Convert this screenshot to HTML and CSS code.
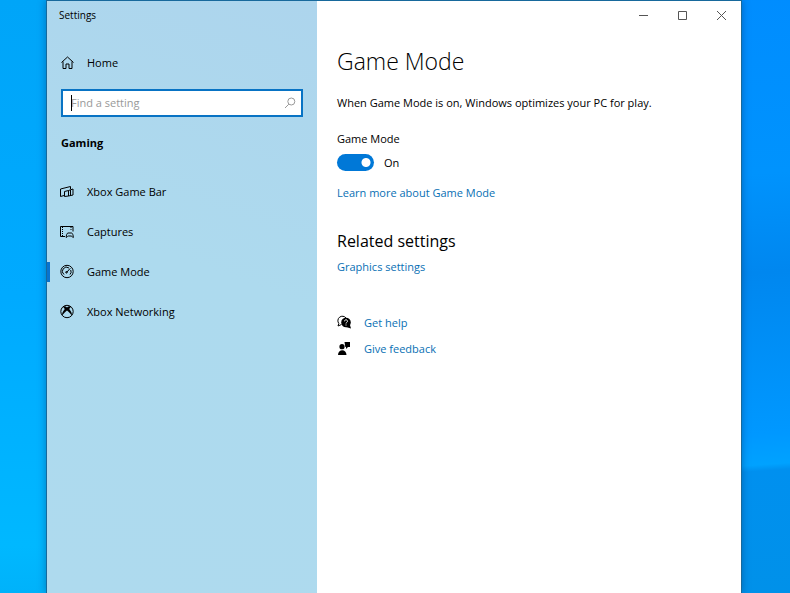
FILE: index.html
```html
<!DOCTYPE html>
<html lang="en">
<head>
<meta charset="utf-8">
<title>Settings</title>
<link rel="stylesheet" href="styles.css">
</head>
<body>
<div class="desktop">
  <div class="window">
    <aside class="sidebar">
      <div class="app-title">Settings</div>
      <a class="nav-link home" href="#">
        <svg class="icon" viewBox="0 0 16 16"><path d="M2.500 7.500 8.500 2l6 5.500M4 6.500v7h3V9h3v4.500h3v-7"/></svg>
        <span>Home</span>
      </a>
      <form class="search">
        <input class="search-input" type="text" aria-label="Find a setting" placeholder="Find a setting">
        <span class="caret"></span>
        <button class="search-button" type="button" aria-label="Search">
          <svg class="search-icon" viewBox="0 0 12 12"><circle cx="7.3" cy="4.5" r="3.5"/><path d="M4.8 7.2 1 11"/></svg>
        </button>
      </form>
      <h2 class="category">Gaming</h2>
      <nav class="nav">
        <a class="nav-link" href="#">
          <svg class="icon" viewBox="0 0 16 16"><path d="M5 11.500 1.500 12.500V5L11.500 2.500V5M5.500 12.500V7.500L9.500 6.500v5.500zM9.500 6.500l4.500-1.500v6l-4.500 1M11.500 6v5.500"/></svg>
          <span>Xbox Game Bar</span>
        </a>
        <a class="nav-link" href="#">
          <svg class="icon" viewBox="0 0 16 16"><path d="M6 12.500H1.500v-10h12.500V7.500"/><path stroke-dasharray="1 1" d="M3.500 3v9M12 3v4"/><path d="M7.200 13.500c0-2 .7-4.500 1.800-4.500h3.500c1.100 0 1.800 2.500 1.800 4.500-1 0-1.300-1.500-2-1.500h-3c-.8 0-1.200 1.500-2.100 1.500z"/></svg>
          <span>Captures</span>
        </a>
        <a class="nav-link selected" href="#" aria-current="page">
          <svg class="icon" viewBox="0 0 16 16"><circle cx="8" cy="7.500" r="6.200"/><path d="M5 10.500A4 4 0 0 1 10 4M11.700 6a4 4 0 0 1-.7 4.500M7.500 8.500 11.300 4.300"/><circle cx="7.500" cy="8.300" r=".8"/></svg>
          <span>Game Mode</span>
        </a>
        <a class="nav-link" href="#">
          <svg class="icon" viewBox="0 0 16 16"><circle cx="8" cy="7.500" r="6.200"/><path class="solid" d="M3.800 2.500C5.500 1.900 7 2.700 8 3.400c1-.7 2.500-1.500 4.200-.9L10.200 5c1.500 1.800 3 4.300 2.800 6.600C11.500 9.600 9.500 7.800 8 6.500 6.500 7.800 4.500 9.600 3 11.600 2.800 9.300 4.300 6.800 5.800 5z"/></svg>
          <span>Xbox Networking</span>
        </a>
      </nav>
    </aside>
    <main class="content">
      <div class="caption-buttons">
        <button class="caption-button" type="button" aria-label="Minimize"><svg viewBox="0 0 11 11"><path d="M1 5.500h9"/></svg></button>
        <button class="caption-button" type="button" aria-label="Maximize"><svg viewBox="0 0 11 11"><path d="M1.500 1.500h8v8h-8z"/></svg></button>
        <button class="caption-button" type="button" aria-label="Close"><svg viewBox="0 0 11 11"><path d="m1 1 9 9M10 1l-9 9"/></svg></button>
      </div>
      <h1 class="page-title">Game Mode</h1>
      <p class="description">When Game Mode is on, Windows optimizes your PC for play.</p>
      <label class="toggle-label" for="game-mode">Game Mode</label>
      <div class="toggle-row">
        <input class="toggle" id="game-mode" type="checkbox" role="switch" checked>
        <span>On</span>
      </div>
      <a class="link" href="#">Learn more about Game Mode</a>
      <h2 class="section-title">Related settings</h2>
      <a class="link" href="#">Graphics settings</a>
      <div class="support">
        <a class="support-link" href="#">
          <svg class="icon" viewBox="0 0 16 16"><path d="M4.500 9.500 1 11l.8-2.500A4.200 4.200 0 1 1 9 3"/><circle class="solid" cx="9" cy="7.500" r="4.800"/><path class="solid" d="m9 12 5 1.500-1.300-4.500z"/><path class="mark" d="M7.500 6.300c0-2 3-2 3 0 0 1-1.500 1-1.500 2.200M9 9.500v1"/></svg>
          <span>Get help</span>
        </a>
        <a class="support-link" href="#">
          <svg class="icon" viewBox="0 0 16 16"><circle class="solid" cx="5" cy="5.700" r="2.600"/><path class="solid" d="M1 14c0-6.500 8.500-6.500 8.500 0zM7.500 1H13v5h-2L9 8V6H8.300z"/></svg>
          <span>Give feedback</span>
        </a>
      </div>
    </main>
  </div>
</div>
</body>
</html>
```
FILE: styles.css
```css
* {
  box-sizing: border-box;
}

body {
  margin: 0;
  font: 11px/16px "Open Sans", "Noto Sans", sans-serif;
  color: #000;
}

h1, h2, p {
  margin: 0;
}

a {
  text-decoration: none;
}

button {
  border: 0;
  padding: 0;
  background: none;
}

svg {
  display: block;
  fill: none;
  stroke: currentColor;
}

.desktop {
  display: flex;
  min-height: 100vh;
  padding: 0 48px 0 46px;
  background:
    linear-gradient(176deg, #008cff 0%, #0093fd 32%, #0087ef 48%, #0098ff 74%, #00a2ff 79%, #0090ef 80%, #0091e9 100%) right / 50% 100% no-repeat,
    linear-gradient(#00a5f8, #00aaff 50%, #00b8ff 92%, #00b2fa);
}

.window {
  display: flex;
  flex: 1;
  border: 1px solid #17699c;
  border-bottom: 0;
  background: #fff;
  box-shadow: 0 0 8px rgba(0, 40, 90, 0.4);
}

.sidebar {
  width: 270px;
  padding: 6px 0;
  background: linear-gradient(200deg, #add5ed, #addaee 45%, #aedaee);
}

.app-title {
  padding-left: 12px;
  font-size: 10px;
}

.nav-link {
  display: flex;
  align-items: center;
  gap: 12px;
  height: 32px;
  padding-left: 12px;
  color: #000;
}

.home {
  margin-top: 24px;
}

.icon {
  width: 16px;
  height: 16px;
  flex: none;
}

.solid {
  fill: currentColor;
  stroke: none;
}

.mark {
  stroke: #fff;
}

.search {
  position: relative;
  display: flex;
  align-items: center;
  height: 28px;
  margin: 10px 14px 0;
  border: 2px solid #0873c4;
  background: #fff;
}

.search-input {
  flex: 1;
  min-width: 0;
  padding: 0 0 0 8px;
  border: 0;
  outline: 0;
  background: none;
  font: inherit;
}

.search-input::placeholder {
  color: #999;
  opacity: 1;
}

.caret {
  position: absolute;
  left: 8px;
  width: 1px;
  height: 16px;
  background: #000;
}

.search-button {
  padding: 0 5px;
  color: #999;
}

.search-icon {
  width: 12px;
  height: 12px;
}

.category {
  margin: 18px 14px 0;
  font-size: 11px;
  line-height: 16px;
}

.nav {
  display: grid;
  gap: 8px;
  margin-top: 25px;
}

.selected {
  position: relative;
}

.selected::before {
  content: "";
  position: absolute;
  left: 0;
  width: 3px;
  height: 20px;
  background: #0873cf;
}

.content {
  flex: 1;
  padding-left: 20px;
}

.caption-buttons {
  display: flex;
  justify-content: flex-end;
}

.caption-button {
  display: grid;
  place-items: center;
  width: 39px;
  height: 28px;
  color: #555;
}

.caption-button svg {
  width: 11px;
  height: 11px;
}

.page-title {
  margin-top: 16px;
  font-size: 23px;
  line-height: 32px;
  font-weight: 300;
}

.description {
  margin-top: 18px;
}

.toggle-label {
  display: block;
  margin-top: 20px;
}

.toggle-row {
  display: flex;
  align-items: center;
  gap: 10px;
  margin: 7px 0 14px;
}

.toggle {
  appearance: none;
  width: 37px;
  height: 17px;
  margin: 0;
  border-radius: 9px;
  background: radial-gradient(circle at 29px 50%, #fff 4px, #0078d7 5px);
}

.link,
.support-link {
  color: #086fb4;
}

.section-title {
  margin: 28px 0 6px;
  font-size: 16px;
  line-height: 24px;
  font-weight: 400;
}

.support {
  display: grid;
  gap: 10px;
  margin-top: 40px;
}

.support-link {
  display: flex;
  gap: 11px;
}

.support-link .icon {
  color: #000;
}
```
